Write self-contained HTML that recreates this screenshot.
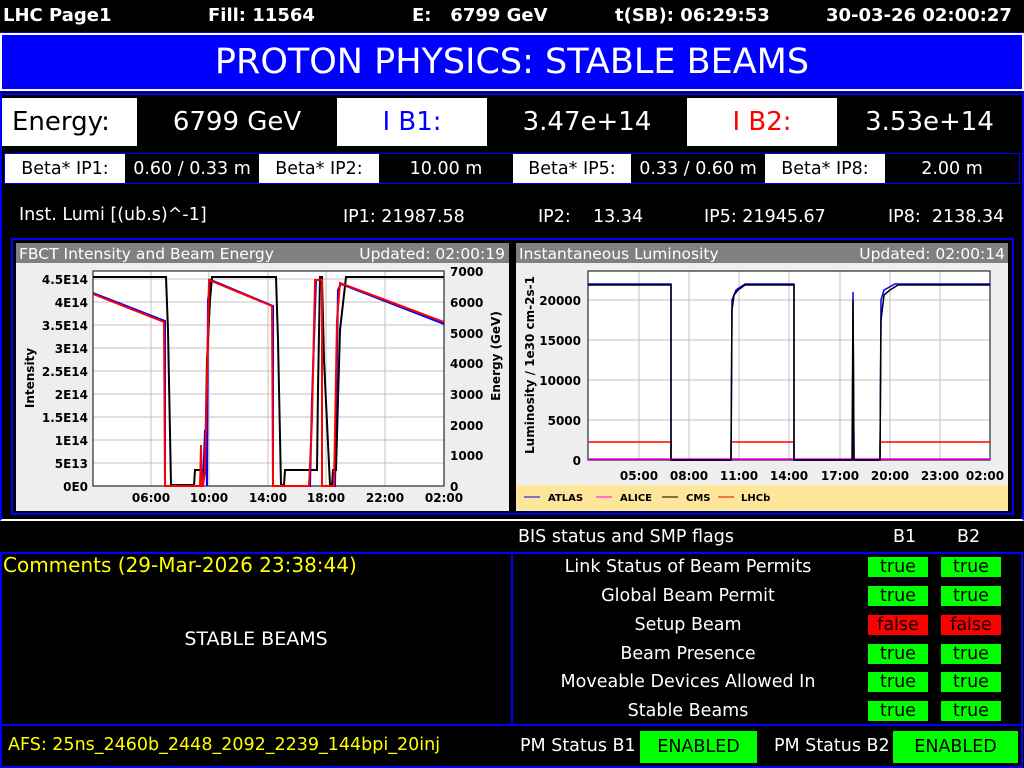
<!DOCTYPE html>
<html><head><meta charset="utf-8"><style>
*{margin:0;padding:0;box-sizing:border-box}
body{width:1024px;height:768px;background:#000;position:relative;overflow:hidden;font-family:"DejaVu Sans","Liberation Sans",sans-serif;color:#fff}
.a{position:absolute}
.c{display:flex;align-items:center;justify-content:center}
.top{font-weight:bold;font-size:18px;top:5px}
.bet{font-size:17.5px}
.w{background:#fff;color:#000}
.bd{font-size:17.5px;width:60px;height:20px;color:#000;background:#00ff00}
.lab{font-size:17.5px;width:340px;left:518px;text-align:center;line-height:20px}
</style></head><body>
<div class="a top" style="left:3px">LHC Page1</div>
<div class="a top" style="left:208px">Fill: 11564</div>
<div class="a top" style="left:412px">E:&nbsp;&nbsp; 6799 GeV</div>
<div class="a top" style="left:615px">t(SB): 06:29:53</div>
<div class="a top" style="left:826px">30-03-26 02:00:27</div>
<div class="a c" style="left:0;top:33px;width:1024px;height:58px;border:2px solid #fff;background:#0000ff;font-size:35px;outline:1px solid #0000ff">PROTON PHYSICS: STABLE BEAMS</div>
<div class="a" style="left:0;top:93px;width:1024px;height:428px;border:2px solid #0000ff;border-bottom:2px solid #fff"></div>
<div class="a c w" style="left:2px;top:98px;width:135px;height:48px;font-size:26px;justify-content:flex-start;padding-left:10px">Energy:</div>
<div class="a c" style="left:137px;top:98px;width:200px;height:48px;font-size:26px">6799 GeV</div>
<div class="a c w" style="left:337px;top:98px;width:150px;height:48px;font-size:26px;color:#0000ff">I B1:</div>
<div class="a c" style="left:487px;top:98px;width:200px;height:48px;font-size:26px">3.47e+14</div>
<div class="a c w" style="left:687px;top:98px;width:150px;height:48px;font-size:26px;color:#ff0000">I B2:</div>
<div class="a c" style="left:837px;top:98px;width:185px;height:48px;font-size:26px">3.53e+14</div>
<div class="a" style="left:4px;top:153px;width:1016px;height:31px;border:1px solid #0000ff"></div>
<div class="a c w bet" style="left:5px;top:154px;width:120px;height:29px">Beta* IP1:</div>
<div class="a c bet" style="left:125px;top:154px;width:134px;height:29px">0.60 / 0.33 m</div>
<div class="a c w bet" style="left:259px;top:154px;width:120px;height:29px">Beta* IP2:</div>
<div class="a c bet" style="left:379px;top:154px;width:134px;height:29px">10.00 m</div>
<div class="a c w bet" style="left:513px;top:154px;width:118px;height:29px">Beta* IP5:</div>
<div class="a c bet" style="left:631px;top:154px;width:134px;height:29px">0.33 / 0.60 m</div>
<div class="a c w bet" style="left:765px;top:154px;width:120px;height:29px">Beta* IP8:</div>
<div class="a c bet" style="left:885px;top:154px;width:134px;height:29px">2.00 m</div>
<div class="a bet" style="left:19px;top:205px">Inst. Lumi [(ub.s)^-1]</div>
<div class="a bet" style="left:343px;top:207px">IP1: 21987.58</div>
<div class="a bet" style="left:538px;top:207px">IP2:&nbsp;&nbsp;&nbsp; 13.34</div>
<div class="a bet" style="left:704px;top:207px">IP5: 21945.67</div>
<div class="a bet" style="left:888px;top:207px">IP8:&nbsp; 2138.34</div>
<div class="a" style="left:11px;top:238px;width:1003px;height:277px;border:2px solid #0000ff"></div>
<svg class="a" style="left:16px;top:243px" width="493" height="268" viewBox="16 243 493 268" font-family="DejaVu Sans" font-size="12">
<rect x="16" y="243" width="493" height="268" fill="#eee"/>
<rect x="16" y="243" width="493" height="20" fill="#808080"/>
<text x="19" y="259" fill="#fff" font-size="15.5">FBCT Intensity and Beam Energy</text>
<text x="505" y="259" fill="#fff" font-size="15.5" text-anchor="end">Updated: 02:00:19</text>
<rect x="93" y="271" width="351" height="215" fill="#fff"/>
<g stroke="#c0c0c0" stroke-width="1">
<line x1="151" y1="271" x2="151" y2="486"/><line x1="209" y1="271" x2="209" y2="486"/><line x1="268" y1="271" x2="268" y2="486"/><line x1="326" y1="271" x2="326" y2="486"/><line x1="385" y1="271" x2="385" y2="486"/>
<line x1="93" y1="279" x2="444" y2="279"/><line x1="93" y1="302" x2="444" y2="302"/><line x1="93" y1="325" x2="444" y2="325"/><line x1="93" y1="348" x2="444" y2="348"/><line x1="93" y1="371" x2="444" y2="371"/><line x1="93" y1="394" x2="444" y2="394"/><line x1="93" y1="417" x2="444" y2="417"/><line x1="93" y1="440" x2="444" y2="440"/><line x1="93" y1="463" x2="444" y2="463"/>
</g>
<rect x="93" y="271" width="351" height="215" fill="none" stroke="#000"/>
<g font-weight="bold" fill="#000" text-anchor="end">
<text x="88" y="284">4.5E14</text><text x="88" y="307">4E14</text><text x="88" y="330">3.5E14</text><text x="88" y="353">3E14</text><text x="88" y="376">2.5E14</text><text x="88" y="399">2E14</text><text x="88" y="422">1.5E14</text><text x="88" y="445">1E14</text><text x="88" y="468">5E13</text><text x="88" y="491">0E0</text>
</g>
<g font-weight="bold" fill="#000">
<text x="450" y="276">7000</text><text x="450" y="307">6000</text><text x="450" y="338">5000</text><text x="450" y="368">4000</text><text x="450" y="399">3000</text><text x="450" y="430">2000</text><text x="450" y="460">1000</text><text x="450" y="491">0</text>
</g>
<g font-weight="bold" fill="#000" text-anchor="middle">
<text x="151" y="502">06:00</text><text x="209" y="502">10:00</text><text x="268" y="502">14:00</text><text x="326" y="502">18:00</text><text x="385" y="502">22:00</text><text x="444" y="502">02:00</text>
</g>
<text transform="translate(34 378) rotate(-90)" font-weight="bold" text-anchor="middle" fill="#000">Intensity</text>
<text transform="translate(500 356) rotate(-90)" font-weight="bold" text-anchor="middle" fill="#000">Energy (GeV)</text>
<polyline fill="none" stroke="#0000ff" stroke-width="2" points="93,293 165,321 165,486 203,486 205,430 207,486 208,300 211,280 273,306 273,486 310,486 312,400 316,280 322,280 322,486 335,486 338,290 341,284 444,324"/>
<polyline fill="none" stroke="#000" stroke-width="2" points="93,277 166,277 168,330 171,485 194,485 195,470 205,470 207,360 210,300 212,277 276,277 278,340 281,485 284,485 285,470 317,470 318,390 320,277 322,277 324,360 330,485 332,485 333,470 336,470 340,330 346,277 444,277"/>
<polyline fill="none" stroke="#ff0000" stroke-width="2" points="93,294 164,322 165,486 200,486 201,445 202,486 203,486 205,470 207,380 209,280 272,306 273,486 309,486 312,420 315,280 322,280 322,486 334,486 337,320 340,283 444,322"/>
</svg>
<svg class="a" style="left:516px;top:243px" width="492" height="268" viewBox="516 243 492 268" font-family="DejaVu Sans" font-size="12">
<rect x="516" y="243" width="492" height="268" fill="#eee"/>
<rect x="516" y="243" width="492" height="20" fill="#808080"/>
<text x="519" y="259" fill="#fff" font-size="15.5">Instantaneous Luminosity</text>
<text x="1005" y="259" fill="#fff" font-size="15.5" text-anchor="end">Updated: 02:00:14</text>
<rect x="588" y="271" width="402" height="189" fill="#fff"/>
<g stroke="#c0c0c0">
<line x1="639" y1="271" x2="639" y2="460"/><line x1="689" y1="271" x2="689" y2="460"/><line x1="739" y1="271" x2="739" y2="460"/><line x1="789" y1="271" x2="789" y2="460"/><line x1="840" y1="271" x2="840" y2="460"/><line x1="890" y1="271" x2="890" y2="460"/><line x1="940" y1="271" x2="940" y2="460"/>
<line x1="588" y1="300" x2="990" y2="300"/><line x1="588" y1="340" x2="990" y2="340"/><line x1="588" y1="380" x2="990" y2="380"/><line x1="588" y1="420" x2="990" y2="420"/>
</g>
<rect x="588" y="271" width="402" height="189" fill="none" stroke="#000"/>
<g font-weight="bold" fill="#000" text-anchor="end">
<text x="581" y="305">20000</text><text x="581" y="345">15000</text><text x="581" y="385">10000</text><text x="581" y="425">5000</text><text x="581" y="465">0</text>
</g>
<g font-weight="bold" fill="#000" text-anchor="middle">
<text x="639" y="480">05:00</text><text x="689" y="480">08:00</text><text x="739" y="480">11:00</text><text x="789" y="480">14:00</text><text x="840" y="480">17:00</text><text x="890" y="480">20:00</text><text x="940" y="480">23:00</text><text x="985" y="480">02:00</text>
</g>
<text transform="translate(534 365) rotate(-90)" font-weight="bold" text-anchor="middle" fill="#000">Luminosity / 1e30 cm-2s-1</text>
<polyline fill="none" stroke="#ff00ff" stroke-width="1.5" points="588,459 990,459"/>
<polyline fill="none" stroke="#ff0000" stroke-width="1.5" points="588,442 671,442 671,460 731,460 731,442 794,442 794,460 853,460 853,450 854,460 880,460 880,442 990,442"/>
<polyline fill="none" stroke="#0000ff" stroke-width="1.5" points="588,284 671,284 671,460 731,460 732,300 736,290 745,284 794,284 794,460 853,460 853,292 854,460 880,460 881,300 884,290 895,284 990,284"/>
<polyline fill="none" stroke="#000" stroke-width="1.5" points="588,285 671,285 671,460 731,460 732,310 734,295 738,290 745,285 794,285 794,460 852,460 853,300 854,460 880,460 881,320 884,295 890,290 898,285 990,285"/>
<rect x="516" y="485" width="492" height="25" fill="#fde59a"/>
<g font-size="10" font-weight="bold" fill="#000">
<line x1="524" y1="497" x2="540" y2="497" stroke="#0000ff"/><text x="548" y="501">ATLAS</text>
<line x1="596" y1="497" x2="612" y2="497" stroke="#ff00ff"/><text x="620" y="501">ALICE</text>
<line x1="662" y1="497" x2="678" y2="497" stroke="#000"/><text x="686" y="501">CMS</text>
<line x1="718" y1="497" x2="734" y2="497" stroke="#ff0000"/><text x="741" y="501">LHCb</text>
</g>
</svg>
<div class="a bet" style="left:518px;top:527px">BIS status and SMP flags</div>
<div class="a bet" style="left:893px;top:527px">B1</div>
<div class="a bet" style="left:957px;top:527px">B2</div>
<div class="a" style="left:0;top:552px;width:1023px;height:174px;border:2px solid #0000ff"></div>
<div class="a" style="left:511px;top:552px;width:2px;height:174px;background:#0000ff"></div>
<div class="a" style="left:3px;top:553px;font-size:20px;color:#ffff00">Comments (29-Mar-2026 23:38:44)</div>
<div class="a c" style="left:0;top:627px;width:512px;height:24px;font-size:19px">STABLE BEAMS</div>
<div class="a lab" style="top:557px">Link Status of Beam Permits</div>
<div class="a lab" style="top:586px">Global Beam Permit</div>
<div class="a lab" style="top:615px">Setup Beam</div>
<div class="a lab" style="top:644px">Beam Presence</div>
<div class="a lab" style="top:672px">Moveable Devices Allowed In</div>
<div class="a lab" style="top:701px">Stable Beams</div>
<div class="a c bd" style="left:868px;top:557px">true</div><div class="a c bd" style="left:941px;top:557px">true</div>
<div class="a c bd" style="left:868px;top:586px">true</div><div class="a c bd" style="left:941px;top:586px">true</div>
<div class="a c bd" style="left:868px;top:615px;background:#ff0000">false</div><div class="a c bd" style="left:941px;top:615px;background:#ff0000">false</div>
<div class="a c bd" style="left:868px;top:644px">true</div><div class="a c bd" style="left:941px;top:644px">true</div>
<div class="a c bd" style="left:868px;top:672px">true</div><div class="a c bd" style="left:941px;top:672px">true</div>
<div class="a c bd" style="left:868px;top:701px">true</div><div class="a c bd" style="left:941px;top:701px">true</div>
<div class="a" style="left:0;top:724px;width:1023px;height:44px;border:2px solid #0000ff"></div>
<div class="a" style="left:8px;top:735px;font-size:17.5px;color:#ffff00">AFS: 25ns_2460b_2448_2092_2239_144bpi_20inj</div>
<div class="a bet" style="left:520px;top:736px">PM Status B1</div>
<div class="a c bd" style="left:640px;top:731px;width:117px;height:32px">ENABLED</div>
<div class="a bet" style="left:774px;top:736px">PM Status B2</div>
<div class="a c bd" style="left:893px;top:731px;width:125px;height:32px">ENABLED</div>
</body></html>
